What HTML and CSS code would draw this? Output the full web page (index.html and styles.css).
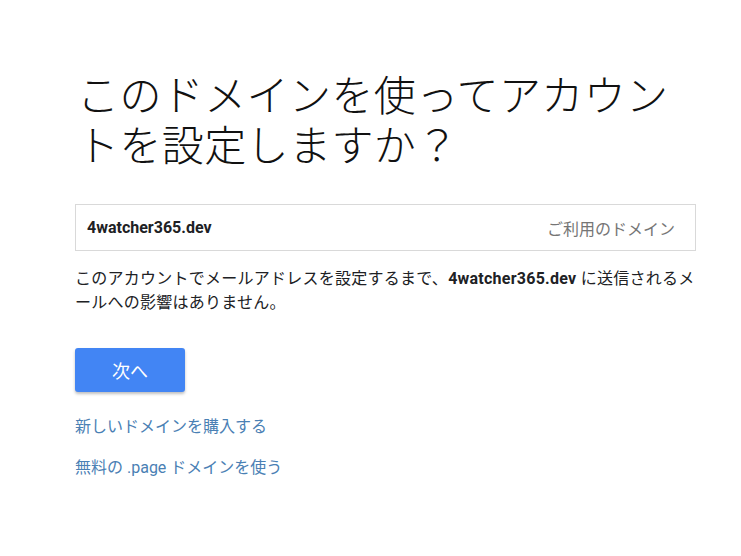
FILE: index.html
```html
<!DOCTYPE html>
<html lang="ja">
<head>
<meta charset="utf-8">
<link rel="stylesheet" href="styles.css">
</head>
<body>
<main class="page">
  <h1 class="title">このドメインを使ってアカウントを設定しますか？</h1>
  <div class="domain-box">
    <span class="domain-name">4watcher365.dev</span>
    <span class="domain-label">ご利用のドメイン</span>
  </div>
  <p class="note">このアカウントでメールアドレスを設定するまで、<b>4watcher365.dev</b> に送信されるメールへの影響はありません。</p>
  <button class="next-btn">次へ</button>
  <div class="links">
    <a class="link" href="#">新しいドメインを購入する</a>
    <a class="link" href="#">無料の .page ドメインを使う</a>
  </div>
</main>
</body>
</html>
```

FILE: styles.css
```css
html, body {
  margin: 0;
  padding: 0;
  background: #ffffff;
}
body {
  font-family: Roboto, "Noto Sans CJK JP", sans-serif;
  color: #202124;
}
.page {
  width: 621px;
  padding: 72px 0 0 75px;
  display: flex;
  flex-direction: column;
  align-items: flex-start;
}
.title {
  margin: 0 0 0 2px;
  font-size: 42px;
  line-height: 50px;
  font-weight: 300;
  color: #111;
  width: 610px;
  letter-spacing: 0.4px;
}
.domain-box {
  margin-top: 32px;
  box-sizing: border-box;
  width: 621px;
  height: 47px;
  border: 1px solid #d9d9d9;
  display: flex;
  align-items: center;
  justify-content: space-between;
  padding: 0 20px 0 11px;
  font-size: 16px;
}
.domain-name {
  font-weight: 700;
  color: #202124;
}
.domain-label {
  color: #757575;
}
.note {
  margin: 16px 0 0 0;
  font-size: 16px;
  line-height: 24px;
  color: #202124;
  width: 621px;
  letter-spacing: 0.25px;
}
.note b {
  font-weight: 700;
}
.next-btn {
  margin-top: 33px;
  width: 110px;
  height: 44px;
  border: none;
  border-radius: 3px;
  background: #4285f4;
  color: #ffffff;
  font-family: Roboto, "Noto Sans CJK JP", sans-serif;
  font-size: 18px;
  box-shadow: 0 2px 3px rgba(0,0,0,0.25);
  cursor: pointer;
}
.links {
  margin-top: 22px;
  display: flex;
  flex-direction: column;
  gap: 15px;
}
.link {
  font-size: 16px;
  line-height: 26px;
  color: #4a80b4;
  text-decoration: none;
}
```
